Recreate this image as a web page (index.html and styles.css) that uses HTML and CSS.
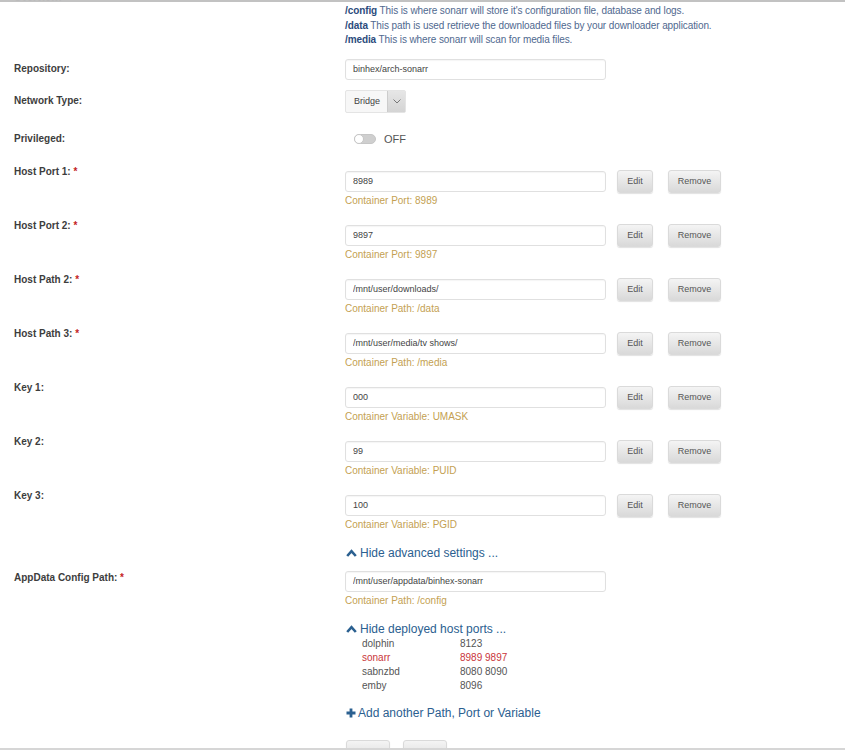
FILE: index.html
```html
<!DOCTYPE html>
<html lang="en">

<head>
    <meta charset="UTF-8">
    <title>Add Container</title>
    <link rel="stylesheet" href="styles.css">
</head>

<body>
    <div class="frame">
        <div class="row overview">
            <div class="label">Overview:</div>
            <div class="desc">
                <div><b>/config</b> This is where sonarr will store it's configuration file, database and logs.</div>
                <div><b>/data</b> This path is used retrieve the downloaded files by your downloader application.</div>
                <div><b>/media</b> This is where sonarr will scan for media files.</div>
            </div>
        </div>

        <div class="row center repo">
            <div class="label">Repository:</div>
            <div><input class="textbox" type="text" value="binhex/arch-sonarr"></div>
        </div>

        <div class="row center network">
            <div class="label">Network Type:</div>
            <div>
                <div class="select">
                    <span class="select-text">Bridge</span>
                    <span class="select-arrow">
                        <svg width="8" height="5" viewBox="0 0 8 5"><polyline points="0.5,0.5 4,4 7.5,0.5" fill="none" stroke="#777" stroke-width="1"/></svg>
                    </span>
                </div>
            </div>
        </div>

        <div class="row center privileged">
            <div class="label">Privileged:</div>
            <div class="switch-wrap">
                <span class="switch"><span class="knob"></span></span>
                <span class="switch-text">OFF</span>
            </div>
        </div>

        <div class="row port first">
            <div class="label">Host Port 1: <span class="req">*</span></div>
            <div>
                <div class="field">
                    <input class="textbox" type="text" value="8989">
                    <button class="btn edit">Edit</button>
                    <button class="btn remove">Remove</button>
                </div>
                <div class="hint">Container Port: 8989</div>
            </div>
        </div>

        <div class="row port">
            <div class="label">Host Port 2: <span class="req">*</span></div>
            <div>
                <div class="field">
                    <input class="textbox" type="text" value="9897">
                    <button class="btn edit">Edit</button>
                    <button class="btn remove">Remove</button>
                </div>
                <div class="hint">Container Port: 9897</div>
            </div>
        </div>

        <div class="row port">
            <div class="label">Host Path 2: <span class="req">*</span></div>
            <div>
                <div class="field">
                    <input class="textbox" type="text" value="/mnt/user/downloads/">
                    <button class="btn edit">Edit</button>
                    <button class="btn remove">Remove</button>
                </div>
                <div class="hint">Container Path: /data</div>
            </div>
        </div>

        <div class="row port">
            <div class="label">Host Path 3: <span class="req">*</span></div>
            <div>
                <div class="field">
                    <input class="textbox" type="text" value="/mnt/user/media/tv shows/">
                    <button class="btn edit">Edit</button>
                    <button class="btn remove">Remove</button>
                </div>
                <div class="hint">Container Path: /media</div>
            </div>
        </div>

        <div class="row port">
            <div class="label">Key 1:</div>
            <div>
                <div class="field">
                    <input class="textbox" type="text" value="000">
                    <button class="btn edit">Edit</button>
                    <button class="btn remove">Remove</button>
                </div>
                <div class="hint">Container Variable: UMASK</div>
            </div>
        </div>

        <div class="row port">
            <div class="label">Key 2:</div>
            <div>
                <div class="field">
                    <input class="textbox" type="text" value="99">
                    <button class="btn edit">Edit</button>
                    <button class="btn remove">Remove</button>
                </div>
                <div class="hint">Container Variable: PUID</div>
            </div>
        </div>

        <div class="row port">
            <div class="label">Key 3:</div>
            <div>
                <div class="field">
                    <input class="textbox" type="text" value="100">
                    <button class="btn edit">Edit</button>
                    <button class="btn remove">Remove</button>
                </div>
                <div class="hint">Container Variable: PGID</div>
            </div>
        </div>

        <div class="indent toggle-link advanced">
            <svg class="chev" width="11" height="8" viewBox="0 0 11 8"><polyline points="1.2,7 5.5,2.2 9.8,7" fill="none" stroke="#2b6090" stroke-width="2.6"/></svg>
            Hide advanced settings ...
        </div>

        <div class="row appdata">
            <div class="label">AppData Config Path: <span class="req">*</span></div>
            <div>
                <input class="textbox" type="text" value="/mnt/user/appdata/binhex-sonarr">
                <div class="hint">Container Path: /config</div>
            </div>
        </div>

        <div class="indent toggle-link deployed">
            <svg class="chev" width="11" height="8" viewBox="0 0 11 8"><polyline points="1.2,7 5.5,2.2 9.8,7" fill="none" stroke="#2b6090" stroke-width="2.6"/></svg>
            Hide deployed host ports ...
        </div>

        <div class="indent ports">
            <span>dolphin</span><span>8123</span>
            <span class="mine">sonarr</span><span class="mine">8989 9897</span>
            <span>sabnzbd</span><span>8080 8090</span>
            <span>emby</span><span>8096</span>
        </div>

        <div class="indent toggle-link add">
            <svg class="plus" width="10" height="10" viewBox="0 0 10 10"><path d="M5 0.5V9.5M0.5 5H9.5" fill="none" stroke="#2b6090" stroke-width="2.8"/></svg>
            Add another Path, Port or Variable
        </div>

        <div class="indent actions">
            <button class="btn bottom" aria-label="Apply"></button>
            <button class="btn bottom" aria-label="Done"></button>
        </div>
    </div>
</body>

</html>
```

FILE: styles.css
```css
html, body {
    margin: 0;
    padding: 0;
    overflow: hidden;
    background: #fff;
}

.frame {
    height: 750px;
    box-sizing: border-box;
    overflow: hidden;
    padding: 4px 0 0 14px;
    border-bottom: 2px solid #d6d6d6;
    box-shadow: inset 0 2px 0 #c2c2c2;
    font-family: "Liberation Sans", Arial, sans-serif;
    color: #444;
}

.row {
    display: grid;
    grid-template-columns: 331px 1fr;
}

.row.center {
    align-items: center;
}

.label {
    font-size: 10px;
    font-weight: bold;
    line-height: 12px;
    color: #3d3d3d;
}

.req {
    color: #c41e24;
}

/* overview */
.overview .label {
    margin-top: -12px;
    color: #bbb;
}

.desc {
    font-size: 10px;
    line-height: 14.5px;
    letter-spacing: -0.1px;
    color: #50698f;
}

.desc b {
    color: #2b4b7c;
}

.repo {
    margin-top: 11px;
}

.network {
    margin-top: 10px;
}

.privileged {
    margin-top: 16px;
    height: 20px;
}

.port {
    margin-top: 12px;
}

.port.first {
    margin-top: 17px;
}

.port .field {
    margin-top: 5px;
}

/* inputs */
.textbox {
    display: block;
    box-sizing: border-box;
    width: 261px;
    height: 21px;
    margin: 0;
    padding: 0 7px;
    border: 1px solid #e0e0e0;
    border-radius: 3px;
    box-shadow: inset 0 1px 1px rgba(0, 0, 0, 0.04);
    font-family: "Liberation Sans", Arial, sans-serif;
    font-size: 9px;
    color: #444;
    background: #fff;
}

.field {
    display: flex;
    align-items: center;
    height: 21px;
}

.hint {
    margin-top: 2px;
    font-size: 10px;
    line-height: 14px;
    color: #c49f52;
}

.btn {
    box-sizing: border-box;
    flex: none;
    height: 23px;
    padding: 0;
    border: 1px solid #dadada;
    border-radius: 3px;
    background: linear-gradient(#f4f4f4, #d9d9d9);
    box-shadow: 0 1px 1px rgba(0, 0, 0, 0.12);
    font-family: "Liberation Sans", Arial, sans-serif;
    font-size: 9px;
    color: #555;
}

.btn.edit {
    width: 36px;
    margin-left: 11px;
}

.btn.remove {
    width: 53px;
    margin-left: 15px;
}

/* select */
.select {
    display: inline-flex;
    box-sizing: border-box;
    height: 23px;
    border: 1px solid #e4e4e4;
    border-radius: 2px;
    background: #f7f7f7;
    vertical-align: top;
}

.select-text {
    width: 33px;
    padding-left: 8px;
    font-size: 9px;
    line-height: 21px;
    color: #444;
}

.select-arrow {
    display: flex;
    align-items: center;
    justify-content: center;
    width: 17px;
    border-left: 1px solid #ccc;
    background: linear-gradient(#e6e6e6, #d4d4d4);
}

/* switch */
.switch-wrap {
    display: flex;
    align-items: center;
    padding-left: 9px;
}

.switch {
    position: relative;
    box-sizing: border-box;
    width: 22px;
    height: 10px;
    border: 1px solid #c6c6c6;
    border-radius: 5px;
    background: #cfcfcf;
}

.knob {
    position: absolute;
    left: -1px;
    top: -1px;
    width: 10px;
    height: 10px;
    box-sizing: border-box;
    border: 1px solid #c6c6c6;
    border-radius: 5px;
    background: #fff;
}

.switch-text {
    margin-left: 8px;
    font-size: 11px;
    color: #555;
}

/* links and lists */
.indent {
    margin-left: 331px;
}

.toggle-link {
    display: flex;
    align-items: center;
    font-size: 12px;
    line-height: 16px;
    color: #2b6090;
}

.toggle-link svg {
    margin-left: 1px;
    margin-right: 3px;
}

.toggle-link .plus {
    margin-right: 2px;
}

.advanced {
    margin-top: 13px;
}

.appdata {
    margin-top: 10px;
}

.appdata .label {
    margin-top: 1px;
}

.deployed {
    margin-top: 13px;
}

.ports {
    display: grid;
    grid-template-columns: 98px auto;
    padding-left: 17px;
    font-size: 10px;
    line-height: 14px;
    color: #555;
}

.ports .mine {
    color: #c9353a;
}

.add {
    margin-top: 12px;
}

.actions {
    display: flex;
    margin-top: 19px;
    padding-left: 1px;
}

.btn.bottom {
    width: 44px;
    margin-right: 13px;
}
```
